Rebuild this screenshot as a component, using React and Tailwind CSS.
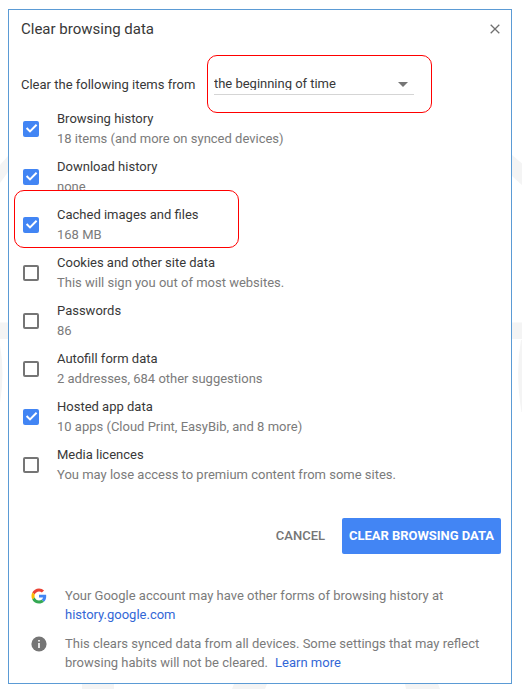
const ITEMS = [
  { label: "Browsing history", note: "18 items (and more on synced devices)", checked: true },
  { label: "Download history", note: "none", checked: true },
  { label: "Cached images and files", note: "168 MB", checked: true },
  { label: "Cookies and other site data", note: "This will sign you out of most websites.", checked: false },
  { label: "Passwords", note: "86", checked: false },
  { label: "Autofill form data", note: "2 addresses, 684 other suggestions", checked: false },
  { label: "Hosted app data", note: "10 apps (Cloud Print, EasyBib, and 8 more)", checked: true },
  { label: "Media licences", note: "You may lose access to premium content from some sites.", checked: false },
];

function Checkbox({ checked }) {
  if (!checked) {
    return <span className="block h-4 w-4 shrink-0 rounded-[2px] border-2 border-[#757575]" />;
  }
  return (
    <span className="block h-4 w-4 shrink-0 rounded-[2px] bg-[#4285f4]">
      <svg viewBox="0 0 16 16" className="block h-4 w-4">
        <path d="M3.6 7 L7 10.4 L13.6 3.8" fill="none" stroke="#fff" strokeWidth="2" />
      </svg>
    </span>
  );
}

function Item({ label, note, checked }) {
  return (
    <li className="flex h-12 pl-[14px]">
      <div className="mt-[13px] mr-[18px]">
        <Checkbox checked={checked} />
      </div>
      <div className="pt-px leading-5 whitespace-nowrap">
        <div className="text-[#383838]">{label}</div>
        <div className="text-[#7b7b7b]">{note}</div>
      </div>
    </li>
  );
}

function GoogleLogo() {
  return (
    <svg viewBox="-1.5 -1.5 51 51" className="h-4 w-4">
      <path fill="#EA4335" d="M24 9.5c3.54 0 6.71 1.22 9.21 3.6l6.85-6.85C35.9 2.38 30.47 0 24 0 14.62 0 6.51 5.38 2.56 13.22l7.98 6.19C12.43 13.72 17.74 9.5 24 9.5z" />
      <path fill="#4285F4" d="M46.98 24.55c0-1.57-.15-3.09-.38-4.55H24v9.02h12.94c-.58 2.96-2.26 5.48-4.78 7.18l7.73 6c4.51-4.18 7.09-10.36 7.09-17.65z" />
      <path fill="#FBBC05" d="M10.53 28.59A14.5 14.5 0 0 1 9.77 24c0-1.6.27-3.14.76-4.59l-7.98-6.19A23.9 23.9 0 0 0 0 24c0 3.88.92 7.54 2.56 10.78l7.97-6.19z" />
      <path fill="#34A853" d="M24 48c6.48 0 11.93-2.13 15.89-5.81l-7.73-6c-2.15 1.45-4.92 2.3-8.16 2.3-6.26 0-11.57-4.22-13.47-9.91l-7.98 6.19C6.51 42.62 14.62 48 24 48z" />
    </svg>
  );
}

function InfoIcon() {
  return (
    <svg viewBox="0 0 16 16" className="h-4 w-4">
      <circle cx="8" cy="8" r="7.6" fill="#757575" />
      <path d="M7.2 4h1.6v1.6H7.2zM7.2 7h1.6v5H7.2z" fill="#fff" />
    </svg>
  );
}

function Watermark() {
  return (
    <svg viewBox="0 0 522 689" className="absolute inset-0 h-full w-full" fill="#f4f4f4">
      <path d="M0 165L8 156V172L0 183zM0 322.5H8V339H0zM0 345Q5 373 0 403z" />
      <path d="M512 155L522 163.5V185L512 176zM512 322.5H522V339H512zM521 340Q515 373 521.5 412H522V340z" />
      <path d="M82 684H114V689H82zM234 684H267L265 689H232zM405 684H438L440 689H406z" />
    </svg>
  );
}

export default function App() {
  return (
    <div className="relative h-[689px] w-[522px] overflow-hidden bg-white pt-[9px] pl-2 font-[Roboto,sans-serif] text-[13px] text-[#383838]">
      <Watermark />
      <main className="relative h-[675px] w-[504px] border border-[#5b9bd5] bg-white">
        <header className="mb-[2px] flex h-[38px] items-center justify-between pr-[11px] pl-3">
          <h1 className="text-[15px] leading-5">Clear browsing data</h1>
          <svg viewBox="0 0 10 10" className="h-[10px] w-[10px]">
            <path d="M.7.7l8.6 8.6M9.3.7L.7 9.3" stroke="#707070" strokeWidth="1.3" />
          </svg>
        </header>
        <div className="flex h-[58px] pt-[25px] pl-3 leading-5 whitespace-nowrap">
          <span className="w-[193px]">Clear the following items from</span>
          <div className="flex h-5 w-[200px] justify-between border-b border-[#d5d5d5]">
            <span className="h-[15px] overflow-hidden leading-[17px] tracking-[-0.02px]">the beginning of time</span>
            <svg viewBox="0 0 10 5" className="mt-[7px] mr-[6px] h-[5px] w-[10px]">
              <path d="M0 0H10L5 5z" fill="#757575" />
            </svg>
          </div>
        </div>
        <ul>
          {ITEMS.map((item) => (
            <Item key={item.label} {...item} />
          ))}
        </ul>
        <div className="mt-[26px] flex h-9 items-center justify-end pr-[10px] font-medium">
          <button className="mr-[17px] text-[#757575]">CANCEL</button>
          <button className="h-9 w-[159px] rounded-[2px] bg-[#4285f4] font-bold tracking-[-0.03px] whitespace-nowrap text-white">CLEAR BROWSING DATA</button>
        </div>
        <footer className="pt-[32px] pl-[22px] leading-[19px] whitespace-nowrap text-[#7b7b7b]">
          <div className="flex h-12 gap-[18px]">
            <div className="pt-[2px]"><GoogleLogo /></div>
            <p>Your Google account may have other forms of browsing history at<br /><a className="text-[#3367d6]">history.google.com</a></p>
          </div>
          <div className="flex gap-[18px]">
            <div className="pt-[2px]"><InfoIcon /></div>
            <p>This clears synced data from all devices. Some settings that may reflect<br />browsing habits will not be cleared.<a className="ml-[7px] text-[#3367d6]">Learn more</a></p>
          </div>
        </footer>
      </main>
      <div className="absolute top-[55px] left-[207px] h-[58px] w-[225px] rounded-[10px] border border-[#f00]" />
      <div className="absolute top-[190px] left-[14px] h-[58px] w-[225px] rounded-[10px] border border-[#f00]" />
    </div>
  );
}
